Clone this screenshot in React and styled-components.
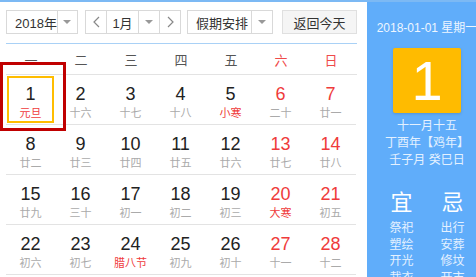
import React from "react";
import styled, { createGlobalStyle } from "styled-components";

const GlobalStyle = createGlobalStyle`
    html, body {
        margin: 0;
        padding: 0;
        background: #fff;
        overflow: hidden;
    }
    body {
        font-family: "Liberation Sans", "Noto Sans CJK SC", sans-serif;
    }
`;

const Frame = styled.div`
    display: flex;
    width: 490px;
    height: 277px;
    border-top: 2px solid #7cb9f4;
    box-sizing: border-box;
`;

const Main = styled.div`
    position: relative;
    width: 367px;
    flex-shrink: 0;
    padding: 8px 0 0 6px;
    box-sizing: border-box;
`;

const Toolbar = styled.div`
    display: flex;
    align-items: center;
    height: 24px;
    width: 351px;
`;

const Select = styled.div`
    display: flex;
    height: 24px;
    width: ${props => props.w}px;
    margin-right: ${props => props.gap || 0}px;
    border: 1px solid #d9d9d9;
    box-sizing: border-box;
    background: #fff;
    font-size: 13px;
    color: #333;
`;

const SelectText = styled.div`
    flex: 1;
    display: flex;
    align-items: center;
    justify-content: ${props => props.center ? "center" : "flex-start"};
    padding-left: ${props => props.center ? 0 : 8}px;
    white-space: nowrap;
`;

const Caret = styled.div`
    width: 20px;
    border-left: 1px solid #d9d9d9;
    display: flex;
    align-items: center;
    justify-content: center;
    &::after {
        content: "";
        border-left: 4px solid transparent;
        border-right: 4px solid transparent;
        border-top: 4px solid #999;
    }
`;

const NavBtn = styled.div`
    width: 20px;
    display: flex;
    align-items: center;
    justify-content: center;
    ${props => props.left ? "border-right: 1px solid #d9d9d9;" : "border-left: 1px solid #d9d9d9;"}
`;

const TodayBtn = styled.div`
    height: 24px;
    width: 75px;
    margin-left: auto;
    border: 1px solid #e0e0e0;
    box-sizing: border-box;
    background: #f5f5f5;
    display: flex;
    align-items: center;
    justify-content: center;
    font-size: 13px;
    color: #333;
`;

const Rule = styled.div`
    width: 351px;
    height: 1px;
    background: #a9d1f6;
    margin-top: 9px;
`;

const WeekRow = styled.div`
    display: grid;
    grid-template-columns: repeat(7, 50px);
    height: 30px;
    border-bottom: 1px solid #e3e3e3;
    width: 351px;
`;

const WeekDay = styled.div`
    display: flex;
    align-items: center;
    justify-content: center;
    font-size: 13px;
    color: ${props => props.red ? "#ef4a4a" : "#555"};
`;

const Grid = styled.div`
    display: grid;
    grid-template-columns: repeat(7, 50px);
    width: 351px;
`;

const Cell = styled.div`
    height: 49px;
    border-bottom: 1px solid #e3e3e3;
    display: flex;
    align-items: stretch;
`;

const CellInner = styled.div`
    flex: 1;
    margin: 1px 2px 1px 1px;
    border: 2px solid ${props => props.selected ? "#ffbd00" : "transparent"};
    display: flex;
    flex-direction: column;
    align-items: center;
    padding-top: 6px;
`;

const Num = styled.div`
    font-size: 18px;
    line-height: 20px;
    color: ${props => props.red ? "#ef3b3b" : "#222"};
`;

const Lunar = styled.div`
    font-size: 11px;
    line-height: 14px;
    margin-top: 2px;
    color: ${props => props.red ? "#ef3b3b" : "#aaa"};
`;

const Mark = styled.div`
    position: absolute;
    left: 0;
    top: 60px;
    width: 66px;
    height: 69px;
    border: 3px solid #c00000;
    box-sizing: border-box;
    pointer-events: none;
`;

const Side = styled.div`
    width: 120px;
    flex-shrink: 0;
    background: #60adfa;
    color: #fff;
    display: flex;
    flex-direction: column;
    align-items: center;
    padding-top: 16px;
    box-sizing: border-box;
`;

const DateLine = styled.div`
    font-size: 12px;
    white-space: nowrap;
    color: #eef6ff;
`;

const DayBox = styled.div`
    width: 68px;
    height: 67px;
    margin-top: 13px;
    background: #ffbb00;
    border-radius: 2px;
    box-shadow: 0 1px 3px rgba(0, 0, 0, 0.15);
    display: flex;
    align-items: center;
    justify-content: center;
    font-size: 56px;
    color: #fff;
`;

const LunarInfo = styled.div`
    margin-top: 5px;
    font-size: 12px;
    line-height: 17px;
    text-align: center;
    color: #e4f1ff;
    white-space: nowrap;
`;

const SideRule = styled.div`
    align-self: stretch;
    margin: 9px 9px 0;
    height: 1px;
    background: rgba(255, 255, 255, 0.45);
`;

const Advice = styled.div`
    display: grid;
    grid-template-columns: 1fr 1fr;
    align-self: stretch;
    margin: 12px 9px 0;
`;

const AdviceCol = styled.div`
    display: flex;
    flex-direction: column;
    align-items: center;
`;

const AdviceHead = styled.div`
    font-size: 22px;
    line-height: 26px;
    color: #fff;
    margin-bottom: 4px;
`;

const AdviceItem = styled.div`
    font-size: 12px;
    line-height: 16.5px;
    color: #e4f1ff;
`;

const Chevron = ({dir}) => (
    <svg width="7" height="12" viewBox="0 0 7 12">
        <path
            d={dir === "left" ? "M6 1 L1 6 L6 11" : "M1 1 L6 6 L1 11"}
            fill="none"
            stroke="#888"
            strokeWidth="1.2"
        />
    </svg>
);

const weekDays = ["一", "二", "三", "四", "五", "六", "日"];

const days = [
    [1, "元旦", true], [2, "十六"], [3, "十七"], [4, "十八"], [5, "小寒", true], [6, "二十"], [7, "廿一"],
    [8, "廿二"], [9, "廿三"], [10, "廿四"], [11, "廿五"], [12, "廿六"], [13, "廿七"], [14, "廿八"],
    [15, "廿九"], [16, "三十"], [17, "初一"], [18, "初二"], [19, "初三"], [20, "大寒", true], [21, "初五"],
    [22, "初六"], [23, "初七"], [24, "腊八节", true], [25, "初九"], [26, "初十"], [27, "十一"], [28, "十二"],
];

const yi = ["祭祀", "塑绘", "开光", "裁衣"];
const ji = ["出行", "安葬", "修坟", "开市"];

const App = () => (
    <>
        <GlobalStyle />
        <Frame>
            <Main>
                <Toolbar>
                    <Select w={72} gap={7}>
                        <SelectText>2018年</SelectText>
                        <Caret />
                    </Select>
                    <Select w={96} gap={6}>
                        <NavBtn left><Chevron dir="left" /></NavBtn>
                        <SelectText center>1月</SelectText>
                        <Caret />
                        <NavBtn><Chevron dir="right" /></NavBtn>
                    </Select>
                    <Select w={86}>
                        <SelectText>假期安排</SelectText>
                        <Caret />
                    </Select>
                    <TodayBtn>返回今天</TodayBtn>
                </Toolbar>
                <Rule />
                <WeekRow>
                    {weekDays.map((d, i) => (
                        <WeekDay key={d} red={i > 4}>{d}</WeekDay>
                    ))}
                </WeekRow>
                <Grid>
                    {days.map(([n, lunar, festival], i) => {
                        const weekend = i % 7 > 4;
                        return (
                            <Cell key={n}>
                                <CellInner selected={n === 1}>
                                    <Num red={weekend}>{n}</Num>
                                    <Lunar red={festival}>{lunar}</Lunar>
                                </CellInner>
                            </Cell>
                        );
                    })}
                </Grid>
                <Mark />
            </Main>
            <Side>
                <DateLine>2018-01-01 星期一</DateLine>
                <DayBox>1</DayBox>
                <LunarInfo>
                    十一月十五<br />
                    丁酉年【鸡年】<br />
                    壬子月 癸巳日
                </LunarInfo>
                <SideRule />
                <Advice>
                    <AdviceCol>
                        <AdviceHead>宜</AdviceHead>
                        {yi.map(t => <AdviceItem key={t}>{t}</AdviceItem>)}
                    </AdviceCol>
                    <AdviceCol>
                        <AdviceHead>忌</AdviceHead>
                        {ji.map(t => <AdviceItem key={t}>{t}</AdviceItem>)}
                    </AdviceCol>
                </Advice>
            </Side>
        </Frame>
    </>
);

export default App;
